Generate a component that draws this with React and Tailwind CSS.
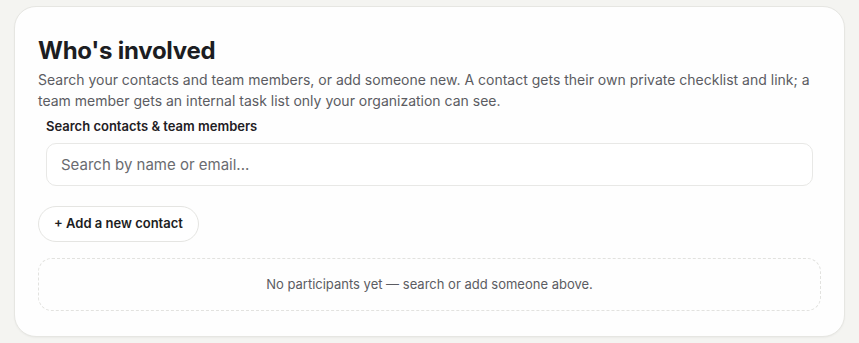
export default function App() {
  return (
    <div className="min-h-[343px] bg-[#f4f4f1] pt-[6px] pl-[14px] pr-[14px] pb-[8px]" style={{ fontFamily: "Inter, 'Noto Sans', sans-serif" }}>
      <div className="w-[831px] rounded-[22px] border border-[#e6e6e2] bg-[#fefefe] px-[23px] pt-[28px] pb-[25px] shadow-[0_1px_2px_rgba(0,0,0,0.04)]">
        <h2 className="text-[24px] font-bold leading-[32px] tracking-[-0.25px] text-[#1c1d22]">Who's involved</h2>
        <p className="mt-[2px] text-[14px] leading-[21px] text-[#5b5c62]">
          Search your contacts and team members, or add someone new. A contact gets their own private checklist and link; a team member gets an internal task list only your organization can see.
        </p>
        <div className="px-2 pt-[6px]">
          <div className="text-[13px] font-semibold leading-[18px] text-[#1f2024]">Search contacts &amp; team members</div>
          <input
            className="mt-[8px] h-[43px] w-full rounded-[10px] border border-[#e8e8e6] bg-white px-[14px] text-[15px] text-[#222] outline-none placeholder:text-[#6a6b70]"
            placeholder="Search by name or email..."
          />
        </div>
        <div className="mt-[20px]">
          <button className="h-[36px] rounded-full border border-[#e5e5e2] bg-white px-[15px] text-[13px] font-semibold text-[#1c1d22]">
            + Add a new contact
          </button>
        </div>
        <div className="mt-[16px] flex h-[53px] items-center justify-center rounded-[14px] border border-dashed border-[#e2e2df] text-[13px] text-[#5b5c62]">
          No participants yet — search or add someone above.
        </div>
      </div>
    </div>
  );
}
